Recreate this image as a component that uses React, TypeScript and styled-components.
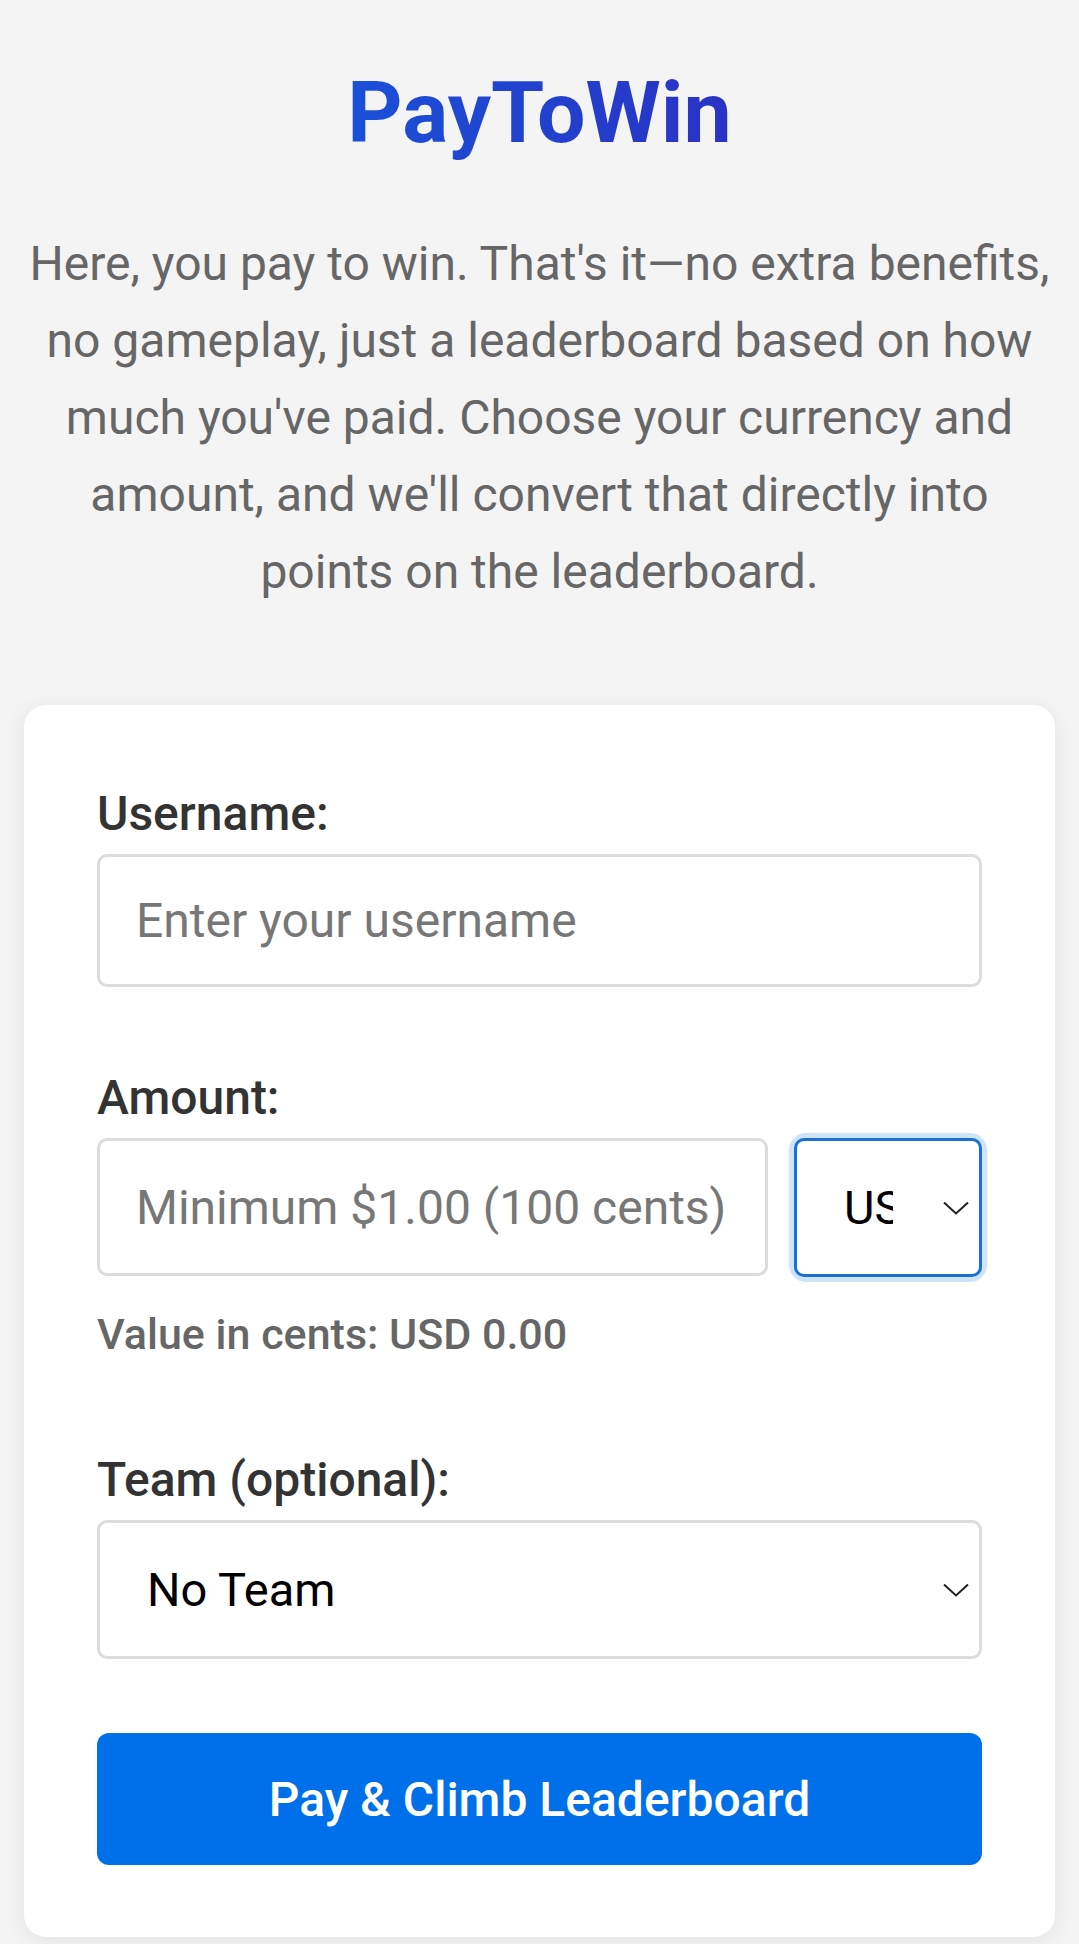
import styled, { createGlobalStyle } from 'styled-components';

const GlobalStyle = createGlobalStyle`
    html, body {
        margin: 0;
        padding: 0;
        background: #f4f4f4;
    }
    body {
        font-family: Roboto, 'Liberation Sans', sans-serif;
    }
    * {
        box-sizing: border-box;
    }
`;

const Chevron = () => (
    <svg width="26" height="14" viewBox="0 0 26 14" fill="none">
        <path d="M1 1.5 L13 12.5 L25 1.5" stroke="#222" strokeWidth="2" />
    </svg>
);

export default function App() {
    return (
        <>
            <GlobalStyle />
            <Page>
                <Title>PayToWin</Title>
                <Intro>
                    Here, you pay to win. That's it—no extra benefits, no
                    gameplay, just a leaderboard based on how much you've paid.
                    Choose your currency and amount, and we'll convert that
                    directly into points on the leaderboard.
                </Intro>
                <Card>
                    <Label htmlFor="username">Username:</Label>
                    <TextInput
                        id="username"
                        type="text"
                        placeholder="Enter your username"
                        $height={133}
                    />

                    <Label htmlFor="amount" $gap={83}>
                        Amount:
                    </Label>
                    <AmountRow>
                        <TextInput
                            id="amount"
                            type="text"
                            placeholder="Minimum $1.00 (100 cents)"
                            $height={138}
                        />
                        <SelectWrap $focused>
                            <Select defaultValue="USD" $width={188} $padRight={86} $focused>
                                <option value="USD">USD</option>
                                <option value="EUR">EUR</option>
                                <option value="GBP">GBP</option>
                            </Select>
                            <ChevronSlot>
                                <Chevron />
                            </ChevronSlot>
                        </SelectWrap>
                    </AmountRow>
                    <CentsNote>Value in cents: USD 0.00</CentsNote>

                    <Label htmlFor="team" $gap={93}>
                        Team (optional):
                    </Label>
                    <SelectWrap>
                        <Select id="team" defaultValue="">
                            <option value="">No Team</option>
                        </Select>
                        <ChevronSlot>
                            <Chevron />
                        </ChevronSlot>
                    </SelectWrap>

                    <PayButton type="button">Pay &amp; Climb Leaderboard</PayButton>
                </Card>
            </Page>
        </>
    );
}

const Page = styled.div`
    display: flex;
    flex-direction: column;
    align-items: center;
    padding: 60px 24px 8px;
`;

const Title = styled.h1`
    margin: 0;
    font-size: 86px;
    line-height: 106px;
    font-weight: 700;
    background: linear-gradient(90deg, #1a50d8 0%, #2a32c4 100%);
    -webkit-background-clip: text;
    background-clip: text;
    color: transparent;
`;

const Intro = styled.p`
    margin: 59px 0 0;
    font-size: 48px;
    line-height: 77px;
    color: #666;
    text-align: center;
`;

const Card = styled.form`
    width: 100%;
    margin-top: 95px;
    display: flex;
    flex-direction: column;
    background: #fff;
    border-radius: 22px;
    box-shadow: 0 4px 22px rgba(0, 0, 0, 0.07);
    padding: 81px 73px 72px;
`;

const Label = styled.label<{ $gap?: number }>`
    display: block;
    margin-top: ${(p) => p.$gap ?? 0}px;
    margin-bottom: 13px;
    font-size: 48px;
    line-height: 55px;
    font-weight: 500;
    color: #333;
`;

const TextInput = styled.input<{ $height: number }>`
    flex: 0 0 auto;
    min-width: 0;
    width: 100%;
    height: ${(p) => p.$height}px;
    padding: 0 36px;
    border: 3px solid #dcdcdc;
    border-radius: 10px;
    font-family: inherit;
    font-size: 48px;
    color: #222;
    background: #fff;
    outline: none;

    &::placeholder {
        color: #777;
    }
`;

const AmountRow = styled.div`
    display: flex;
    gap: 26px;

    & > input {
        flex: 1 1 0;
    }
`;

const SelectWrap = styled.div<{ $focused?: boolean }>`
    position: relative;
    display: flex;
    border-radius: 12px;
    box-shadow: ${(p) => (p.$focused ? '0 0 0 5px #cfe3fb' : 'none')};
`;

const Select = styled.select<{ $width?: number; $padRight?: number; $focused?: boolean }>`
    appearance: none;
    -webkit-appearance: none;
    width: ${(p) => (p.$width ? `${p.$width}px` : '100%')};
    height: 139px;
    padding: 0 ${(p) => p.$padRight ?? 80}px 0 47px;
    border: 3px solid ${(p) => (p.$focused ? '#1a6fd4' : '#dcdcdc')};
    border-radius: 10px;
    background: #fff;
    font-family: inherit;
    font-size: 47px;
    color: #000;
    outline: none;
    overflow: hidden;
`;

const ChevronSlot = styled.span`
    position: absolute;
    right: 13px;
    top: 50%;
    transform: translateY(-50%);
    display: flex;
    pointer-events: none;
`;

const CentsNote = styled.div`
    margin-top: 33px;
    font-size: 43px;
    line-height: 49px;
    font-weight: 500;
    color: #666;
`;

const PayButton = styled.button`
    margin-top: 74px;
    height: 132px;
    border: none;
    border-radius: 12px;
    background: #0070ea;
    color: #fff;
    font-family: inherit;
    font-size: 48px;
    font-weight: 500;
    cursor: pointer;
`;
